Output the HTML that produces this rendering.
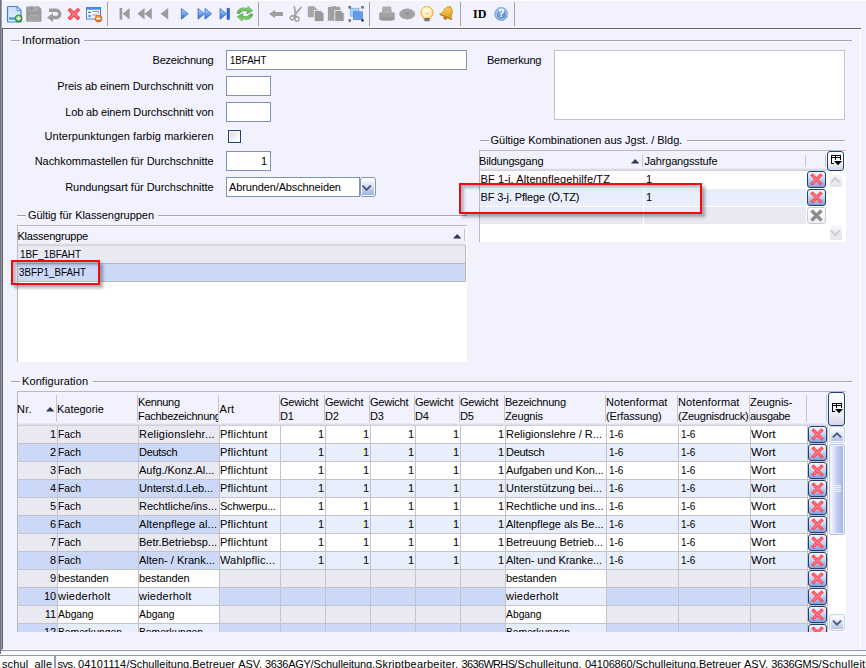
<!DOCTYPE html>
<html lang="de"><head><meta charset="utf-8"><title>Zeugnisformular</title>
<style>
html,body{margin:0;padding:0}
body{width:866px;height:668px;overflow:hidden;position:relative;background:#f2f2fe;font-family:"Liberation Sans",sans-serif;font-size:11px;color:#000;letter-spacing:-0.1px}
.a{position:absolute}
.t{position:absolute;white-space:nowrap;line-height:13px;height:13px}
.r{text-align:right}
.in{position:absolute;box-sizing:border-box;background:#fff;border:1px solid #7b93ba}
.gl{position:absolute;height:1px;background:#a5a5ac}
.sep{position:absolute;width:1px;top:2px;height:24px;background:#a2a2aa}
.hs{position:absolute;width:1px;background:#c6c6cc}
.c{position:absolute;height:17px;box-sizing:border-box;white-space:nowrap;overflow:hidden;line-height:17px;padding:0 1px 0 0;text-indent:0}
.c.r{text-align:right}
.del{position:absolute;width:19px;height:17px;box-sizing:border-box;border:1px solid #1f3f77;border-radius:3px;background:linear-gradient(#f4f7fd 0%,#c9d8f3 45%,#7ea3e2 100%)}
.del.dis{border-color:#c9c9d2;background:linear-gradient(#ffffff,#eeeef4)}
.del svg{position:absolute;left:2px;top:1px}
svg{position:absolute;overflow:visible}
</style></head><body>
<div class="a" style="left:0px;top:0px;width:866px;height:1px;background:#fdfdff;"></div>
<div class="a" style="left:2px;top:0px;width:1px;height:28px;background:#fbfbff;"></div>
<div class="a" style="left:0px;top:0px;width:1px;height:654px;background:#757575;"></div>
<div class="a" style="left:1px;top:0px;width:1px;height:651px;background:#8a9ab8;"></div>
<div class="a" style="left:2px;top:28px;width:859px;height:1px;background:#6a6a6a;"></div>
<div class="a" style="left:2px;top:28px;width:1px;height:621px;background:#646464;"></div>
<div class="a" style="left:860px;top:29px;width:1px;height:621px;background:#fff;"></div>
<div class="a" style="left:3px;top:649px;width:858px;height:1px;background:#fff;"></div>
<div class="a" style="left:1px;top:650px;width:865px;height:1px;background:#8a9ab8;"></div>
<div class="a" style="left:0px;top:651px;width:866px;height:4px;background:#f8f8ff;"></div>
<div class="a" style="left:0px;top:651px;width:1px;height:3px;background:#757575;"></div>
<div class="a" style="left:0px;top:655px;width:866px;height:1px;background:#8a9ab8;"></div>
<div class="a" style="left:0px;top:656px;width:866px;height:12px;background:#fff;"></div>
<svg width="0" height="0" style="left:0;top:0"><defs>
<linearGradient id="gdoc" x1="0" y1="0" x2="0" y2="1"><stop offset="0" stop-color="#c4ddf7"/><stop offset="1" stop-color="#eef5fd"/></linearGradient>
<linearGradient id="gblue" x1="0" y1="0" x2="0" y2="1"><stop offset="0" stop-color="#b0d4fb"/><stop offset="0.5" stop-color="#6ea6f0"/><stop offset="1" stop-color="#2a60d0"/></linearGradient>
<linearGradient id="ggreen" x1="0" y1="0" x2="0" y2="1"><stop offset="0" stop-color="#a4dc90"/><stop offset="1" stop-color="#4aa544"/></linearGradient>
<radialGradient id="gorange" cx="0.4" cy="0.35" r="0.7"><stop offset="0" stop-color="#ffb060"/><stop offset="1" stop-color="#d85a00"/></radialGradient>
<radialGradient id="ggr2" cx="0.4" cy="0.35" r="0.7"><stop offset="0" stop-color="#7cc860"/><stop offset="1" stop-color="#2f8a20"/></radialGradient>
<radialGradient id="ghelp" cx="0.4" cy="0.3" r="0.8"><stop offset="0" stop-color="#8fb4e2"/><stop offset="1" stop-color="#3f72b6"/></radialGradient>
<radialGradient id="gbulb" cx="0.45" cy="0.4" r="0.6"><stop offset="0" stop-color="#fffff4"/><stop offset="0.6" stop-color="#fff0c0"/><stop offset="1" stop-color="#fcc860"/></radialGradient>
<linearGradient id="gbell" x1="0" y1="0" x2="1" y2="1"><stop offset="0" stop-color="#ffe070"/><stop offset="1" stop-color="#d89010"/></linearGradient>
<linearGradient id="gdel" x1="0" y1="0" x2="0" y2="1"><stop offset="0" stop-color="#ff8088"/><stop offset="1" stop-color="#f03848"/></linearGradient>
</defs></svg>
<svg style="left:7px;top:6px" width="16" height="16" viewBox="0 0 16 16"><path d="M1.5 0.5h8.5l4 4v10.5a1 1 0 0 1-1 1h-11.5a1 1 0 0 1-1-1v-13.5a1 1 0 0 1 1-1z" fill="url(#gdoc)" stroke="#3f7fd6" stroke-width="1.2"/>
<path d="M10 0.8v3.7h3.8z" fill="#fff" stroke="#3f7fd6" stroke-width="0.8"/>
<rect x="2" y="11.2" width="8" height="2.6" fill="#4aa0ee"/>
<circle cx="11.6" cy="12.4" r="3.6" fill="url(#ggr2)" stroke="#2c7a22" stroke-width="0.5"/>
<path d="M11.6 10.2v4.4M9.4 12.4h4.4" stroke="#fff" stroke-width="1.5"/></svg>
<svg style="left:26px;top:6px" width="16" height="16" viewBox="0 0 16 16"><path d="M1 0.5h12l2.5 2.5v12a0.8 0.8 0 0 1-.8.8h-13.7a0.8 0.8 0 0 1-.8-.8v-13.7a0.8 0.8 0 0 1 .8-.8z" fill="#9b9b9b"/>
<rect x="3.5" y="0.5" width="8.5" height="5" fill="#a9a9a9"/><rect x="5" y="1.2" width="1.6" height="3" fill="#8a8a8a"/>
<rect x="3" y="8.8" width="10" height="6.6" fill="#ababab"/><path d="M4 11h8M4 13h8" stroke="#979797" stroke-width="1"/></svg>
<svg style="left:47px;top:8px" width="15" height="14" viewBox="0 0 15 14"><path d="M2 2.3h7.2a3.6 3.6 0 0 1 0 7.2h-4" fill="none" stroke="#9c9c9c" stroke-width="3.4"/>
<path d="M0 9.5l6-4.4v8.8z" fill="#9c9c9c"/></svg>
<svg style="left:67px;top:7px" width="14" height="14" viewBox="0 0 14 14"><path d="M1.8 2l10.2 10.2M12 2l-10.2 10.2" stroke="#f4444f" stroke-width="3.8"/>
<path d="M3 3.2l7.8 7.8M10.8 3.2l-7.8 7.8" stroke="#ff7c86" stroke-width="1.4"/></svg>
<svg style="left:86px;top:7px" width="16" height="14" viewBox="0 0 16 14"><rect x="0.5" y="0.5" width="14" height="11.5" fill="#f6f6fa" stroke="#4a82d8" stroke-width="1"/>
<rect x="0.5" y="0.5" width="14" height="2.2" fill="#4a8ae0"/>
<rect x="2.3" y="4.6" width="2.6" height="1.6" fill="#3f7fe0"/><rect x="2.3" y="8.2" width="2.6" height="1.6" fill="#3f7fe0"/>
<path d="M6.3 4.4h6.3v2M6.3 8h5" stroke="#8a8a90" stroke-width="0.9" fill="none"/>
<circle cx="12.5" cy="11.6" r="3.5" fill="url(#gorange)" stroke="#b84a00" stroke-width="0.4"/>
<rect x="10.4" y="10.9" width="4.2" height="1.5" fill="#fff"/></svg>
<div class="sep" style="left:107px"></div>
<svg style="left:119px;top:8px" width="11" height="12" viewBox="0 0 11 12"><rect x="0.6" y="0" width="2.6" height="11.6" fill="#9c9c9c"/><path d="M10.6 0v11.6l-7-5.8z" fill="#9c9c9c"/></svg>
<svg style="left:137px;top:8px" width="15" height="12" viewBox="0 0 15 12"><path d="M7.6 0v11.6l-7.3-5.8zM14.8 0v11.6l-7.3-5.8z" fill="#9c9c9c"/></svg>
<svg style="left:160px;top:8px" width="9" height="12" viewBox="0 0 9 12"><path d="M8.2 0v11.6l-7.6-5.8z" fill="#9c9c9c"/></svg>
<svg style="left:181px;top:8px" width="9" height="12" viewBox="0 0 9 12"><path d="M0.4 0.4v10.8l6.8-5.4z" fill="url(#gblue)" stroke="#2a62cc" stroke-width="0.7"/></svg>
<svg style="left:197px;top:8px" width="15" height="12" viewBox="0 0 15 12"><path d="M1 0.4v10.8l6.6-5.4z" fill="url(#gblue)" stroke="#2a62cc" stroke-width="0.7"/><path d="M8 0.4v10.8l6.6-5.4z" fill="url(#gblue)" stroke="#2a62cc" stroke-width="0.7"/></svg>
<svg style="left:219px;top:8px" width="12" height="12" viewBox="0 0 12 12"><path d="M1 0.4v10.8l6.6-5.4z" fill="url(#gblue)" stroke="#2a62cc" stroke-width="0.7"/><rect x="8" y="0.2" width="2.6" height="11.2" fill="#2a68d8" stroke="#1f58c0" stroke-width="0.5"/></svg>
<svg style="left:237px;top:6px" width="16" height="16" viewBox="0 0 16 16"><path d="M0.2 7.4C0.3 3.8 3.4 1.6 7 1.8L10.6 2.5L10.9 0.2L15.8 4.7L9.9 7.8L10.2 5.3C7.6 4.4 4.2 4.6 3.1 7.5Z" fill="url(#ggreen)" stroke="#4a9f44" stroke-width="0.5"/>
<path d="M0.2 7.4C0.3 3.8 3.4 1.6 7 1.8L10.6 2.5L10.9 0.2L15.8 4.7L9.9 7.8L10.2 5.3C7.6 4.4 4.2 4.6 3.1 7.5Z" transform="rotate(180 7.95 7.7)" fill="url(#ggreen)" stroke="#4a9f44" stroke-width="0.5"/></svg>
<div class="sep" style="left:258px"></div>
<svg style="left:269px;top:9px" width="15" height="10" viewBox="0 0 15 10"><path d="M0 5l6.2-4.2v2.2h7.8v4h-7.8v2.2z" fill="#9e9e9e"/></svg>
<svg style="left:289px;top:6px" width="13" height="16" viewBox="0 0 13 16"><path d="M5.4 0.8l1.6 10.4M12 1.4l-7.6 9.2" stroke="#a4a4a4" stroke-width="1.7" fill="none" stroke-linecap="round"/>
<ellipse cx="3.4" cy="11.8" rx="2.2" ry="2" fill="none" stroke="#a4a4a4" stroke-width="1.5" transform="rotate(-30 3.4 11.8)"/><ellipse cx="8" cy="13" rx="2" ry="2.3" fill="none" stroke="#a4a4a4" stroke-width="1.5"/></svg>
<svg style="left:307px;top:6px" width="18" height="16" viewBox="0 0 18 16"><path d="M0.8 0.2h6.4l3.3 3.2v7.9h-9.7z" fill="#a6a6a6"/><path d="M7.3 4.4h6.4l3.3 3.2v7.9h-9.7z" fill="#9a9a9a" stroke="#f2f2fe" stroke-width="0.8"/></svg>
<svg style="left:327px;top:6px" width="18" height="16" viewBox="0 0 18 16"><path d="M0.9 2.2q0-1.4 1.4-1.4h2.2q2.7-1.4 5.4 0h2.2q1.4 0 1.4 1.4v12.6h-12.6z" fill="#a0a0a0"/>
<path d="M7.8 4.4h6.2l3.2 3.2v7.9h-9.4z" fill="#9a9a9a" stroke="#f2f2fe" stroke-width="0.8"/></svg>
<svg style="left:348px;top:6px" width="16" height="16" viewBox="0 0 16 16"><rect x="2.2" y="2.2" width="8.8" height="8" fill="#a9cdf6" stroke="#7fb2ee" stroke-width="0.7"/>
<rect x="5.6" y="5.8" width="8.8" height="7.6" fill="#5c97e8" fill-opacity="0.92" stroke="#3f7edc" stroke-width="0.7"/>
<g fill="#222"><rect x="0.6" y="0.2" width="2.2" height="2.2"/><rect x="13.4" y="0.2" width="2.2" height="2.2"/><rect x="0.6" y="13.4" width="2.2" height="2.2"/><rect x="13.4" y="13.4" width="2.2" height="2.2"/></g>
<g fill="#fff"><rect x="1.3" y="0.9" width="0.8" height="0.8"/><rect x="14.1" y="0.9" width="0.8" height="0.8"/><rect x="1.3" y="14.1" width="0.8" height="0.8"/></g></svg>
<div class="sep" style="left:369px"></div>
<svg style="left:379px;top:6px" width="16" height="16" viewBox="0 0 16 16"><path d="M3.6 0.4h8.4l1 5.8h-10.4z" fill="#adadad"/><path d="M1.4 6.2h13.2a1.2 1.2 0 0 1 1.2 1.2v5.8a1 1 0 0 1-1 1h-13.6a1 1 0 0 1-1-1v-5.8a1.2 1.2 0 0 1 1.2-1.2z" fill="#a2a2a2"/><rect x="2.6" y="11" width="10.8" height="3.6" fill="#989898"/></svg>
<svg style="left:399px;top:8px" width="17" height="12" viewBox="0 0 17 12"><ellipse cx="8.2" cy="6" rx="8" ry="5.4" fill="#a4a4a4"/><ellipse cx="8.2" cy="5.4" rx="2.2" ry="1.3" fill="#949494"/></svg>
<svg style="left:420px;top:6px" width="14" height="16" viewBox="0 0 14 16"><path d="M7 0.6a6.2 6.2 0 0 1 3.6 11.2l-0.6 1.6h-6l-0.6-1.6a6.2 6.2 0 0 1 3.6-11.2z" fill="url(#gbulb)" stroke="#f0a428" stroke-width="0.9"/>
<path d="M5.2 6.4l1.8 2.2 1.8-2.2" fill="none" stroke="#e8a020" stroke-width="0.8"/>
<rect x="4.4" y="12" width="5.2" height="3.2" rx="0.8" fill="#5a5a5a"/><path d="M4.4 13.9h5.2" stroke="#d0d0d0" stroke-width="0.6"/></svg>
<svg style="left:439px;top:5px" width="17" height="17" viewBox="0 0 17 17"><g transform="rotate(24 8 9)"><path d="M8 1.6c3 0 4.2 2.6 4.4 5.6 0.2 2.6 1 3.8 2.2 5h-13.2c1.2-1.2 2-2.4 2.2-5 0.2-3 1.4-5.6 4.4-5.6z" fill="url(#gbell)" stroke="#c88610" stroke-width="0.7"/>
<circle cx="8" cy="1.4" r="1.1" fill="#d89818"/><ellipse cx="8" cy="13.6" rx="1.8" ry="1.5" fill="#c07a08"/><path d="M1.4 12.2h13.2" stroke="#b87808" stroke-width="1.1"/></g></svg>
<div class="sep" style="left:460px"></div>
<div class="t" style="left:473px;top:7px;font-family:'Liberation Serif',serif;font-weight:bold;font-size:12px;letter-spacing:0;line-height:14px;height:14px">ID</div>
<svg style="left:493px;top:6px" width="16" height="16" viewBox="0 0 16 16"><circle cx="8.2" cy="7.9" r="6.6" fill="url(#ghelp)" stroke="#9cbcec" stroke-width="1"/><circle cx="8.2" cy="7.9" r="5.2" fill="none" stroke="#e2ecfc" stroke-width="0.8"/>
<text x="8.2" y="11.4" text-anchor="middle" font-family="Liberation Sans, sans-serif" font-weight="bold" font-size="10" fill="#fff">?</text></svg>
<div class="sep" style="left:514px"></div>
<div class="gl" style="left:11px;top:40px;width:9px"></div>
<div class="gl" style="left:84px;top:40px;width:768px"></div>
<div class="gl" style="left:11px;top:41px;width:9px;background:#fbfbff"></div>
<div class="gl" style="left:84px;top:41px;width:768px;background:#fbfbff"></div>
<div class="t " style="left:22px;top:34px;letter-spacing:0;transform:scaleX(1.0539);transform-origin:left center;">Information</div>
<div class="t r " style="right:652.66px;top:54px;letter-spacing:-0.261px;">Bezeichnung</div>
<div class="t r " style="right:652.47px;top:80px;letter-spacing:-0.065px;">Preis ab einem Durchschnitt von</div>
<div class="t r " style="right:652.51px;top:106px;letter-spacing:-0.113px;">Lob ab einem Durchschnitt von</div>
<div class="t r " style="right:652.33px;top:130px;letter-spacing:0.07px;">Unterpunktungen farbig markieren</div>
<div class="t r " style="right:652.42px;top:155px;letter-spacing:-0.023px;">Nachkommastellen für Durchschnitte</div>
<div class="t r " style="right:652.42px;top:181px;letter-spacing:-0.025px;">Rundungsart für Durchschnitte</div>
<div class="in" style="left:226px;top:50px;width:241px;height:20px"></div>
<div class="t " style="left:230px;top:54px;letter-spacing:0;transform:scaleX(0.8779);transform-origin:left center;">1BFAHT</div>
<div class="in" style="left:226px;top:76px;width:45px;height:20px"></div>
<div class="in" style="left:226px;top:102px;width:45px;height:20px"></div>
<div class="in" style="left:228px;top:130px;width:13px;height:13px;border-color:#1c3f78;box-shadow:0 0 0 1px #fbfbff,inset 0 0 0 1px #fbfbf6;background:linear-gradient(135deg,#dadada,#fdfdfd 80%)"></div>
<div class="in" style="left:226px;top:151px;width:45px;height:20px"></div>
<div class="t r " style="right:599.1px;top:155px;">1</div>
<div class="in" style="left:226px;top:177px;width:134px;height:20px"></div>
<div class="t " style="left:229px;top:181px;letter-spacing:-0.125px;">Abrunden/Abschneiden</div>
<div class="a" style="left:360px;top:177px;width:16px;height:20px;box-sizing:border-box;border:1px solid #7f96bc;border-radius:3px;box-shadow:inset 0 0 0 1px #fff;background:linear-gradient(#fdfdff 10%,#c4d0ee 60%,#a6b6e0 92%)"></div>
<svg style="left:362px;top:185px" width="10" height="6" viewBox="0 0 10 6"><path d="M0.5 0.7l4.1 4.1l4.1-4.1" fill="none" stroke="#44546e" stroke-width="1.9"/></svg>
<div class="t " style="left:487px;top:54px;letter-spacing:-0.233px;">Bemerkung</div>
<div class="in" style="left:554px;top:50px;width:291px;height:70px;border-color:#c2c2c8"></div>
<div class="gl" style="left:17px;top:215px;width:9px"></div>
<div class="gl" style="left:158px;top:215px;width:309px"></div>
<div class="gl" style="left:17px;top:216px;width:9px;background:#fbfbff"></div>
<div class="gl" style="left:158px;top:216px;width:309px;background:#fbfbff"></div>
<div class="t " style="left:28px;top:209px;letter-spacing:-0.049px;">Gültig für Klassengruppen</div>
<div class="a" style="left:17px;top:225px;width:450px;height:137px;background:#fff;"></div>
<div class="a" style="left:17px;top:225px;width:450px;height:1px;background:#b9b9bf;"></div>
<div class="a" style="left:17px;top:225px;width:1px;height:137px;background:#b9b9bf;"></div>
<div class="a" style="left:18px;top:226px;width:448px;height:18px;background:#f2f2fe;"></div>
<div class="a" style="left:18px;top:243px;width:448px;height:1px;background:#e9e9f1;"></div>
<div class="a" style="left:18px;top:244px;width:448px;height:1px;background:#dddde7;"></div>
<div class="a" style="left:18px;top:245px;width:448px;height:1px;background:#d0d0dc;"></div>
<div class="t " style="left:17.5px;top:230px;letter-spacing:-0.224px;">Klassengruppe</div>
<div class="hs" style="left:464px;top:229px;height:12px"></div>
<svg style="left:453px;top:234px" width="9" height="5" viewBox="0 0 9 5"><path d="M0 4.4l4.2-4.4 4.2 4.4z" fill="#2a3a56"/></svg>
<div class="a" style="left:18px;top:246px;width:447px;height:17px;background:#e9e9f2;"></div>
<div class="a" style="left:18px;top:263px;width:447px;height:1px;background:#b9b9bf;"></div>
<div class="a" style="left:18px;top:264px;width:447px;height:17px;background:#cbd8f7;"></div>
<div class="a" style="left:18px;top:281px;width:447px;height:1px;background:#b9b9bf;"></div>
<div class="a" style="left:465px;top:246px;width:1px;height:36px;background:#b9b9bf;"></div>
<div class="t " style="left:19.5px;top:248px;letter-spacing:0;transform:scaleX(0.8989);transform-origin:left center;">1BF_1BFAHT</div>
<div class="t " style="left:19px;top:266px;letter-spacing:0;transform:scaleX(0.8909);transform-origin:left center;">3BFP1_BFAHT</div>
<div class="gl" style="left:480px;top:140px;width:8.5px"></div>
<div class="gl" style="left:686.5px;top:140px;width:158.5px"></div>
<div class="gl" style="left:480px;top:141px;width:8.5px;background:#fbfbff"></div>
<div class="gl" style="left:686.5px;top:141px;width:158.5px;background:#fbfbff"></div>
<div class="t " style="left:490.5px;top:134px;letter-spacing:-0.022px;">Gültige Kombinationen aus Jgst. / Bldg.</div>
<div class="a" style="left:479px;top:150px;width:367px;height:92px;background:#fff;"></div>
<div class="a" style="left:479px;top:150px;width:367px;height:1px;background:#b9b9bf;"></div>
<div class="a" style="left:479px;top:150px;width:1px;height:92px;background:#b9b9bf;"></div>
<div class="a" style="left:480px;top:151px;width:347px;height:18px;background:#f2f2fe;"></div>
<div class="a" style="left:480px;top:168px;width:347px;height:1px;background:#e9e9f1;"></div>
<div class="a" style="left:480px;top:169px;width:347px;height:1px;background:#dddde7;"></div>
<div class="a" style="left:480px;top:170px;width:347px;height:1px;background:#d0d0dc;"></div>
<div class="t " style="left:479px;top:155px;letter-spacing:-0.197px;">Bildungsgang</div>
<div class="t " style="left:644.5px;top:155px;letter-spacing:-0.171px;">Jahrgangsstufe</div>
<div class="hs" style="left:642px;top:155px;height:12px"></div>
<div class="hs" style="left:805px;top:155px;height:12px"></div>
<div class="hs" style="left:825px;top:155px;height:12px"></div>
<svg style="left:631px;top:159px" width="9" height="5" viewBox="0 0 9 5"><path d="M0 4.4l4.2-4.4 4.2 4.4z" fill="#2a3a56"/></svg>
<div class="a" style="left:480px;top:171px;width:163px;height:17px;background:#fff;"></div>
<div class="a" style="left:644px;top:171px;width:162px;height:17px;background:#fff;"></div>
<div class="a" style="left:480px;top:188px;width:326px;height:1px;background:#fff;"></div>
<div class="a" style="left:643px;top:171px;width:1px;height:17px;background:#fff;"></div>
<div class="t " style="left:480.5px;top:173px;letter-spacing:0.109px;">BF 1-j. Altenpflegehilfe/TZ</div>
<div class="t " style="left:646px;top:173px;">1</div>
<div class="del " style="left:807px;top:171px"><svg style="left:2px;top:1px" width="13" height="13" viewBox="0 0 13 13"><path d="M1.4 1.4l10.2 10.2M11.6 1.4l-10.2 10.2" stroke="#ff4c58" stroke-width="3.4"/><path d="M2.6 2.6l7.8 7.8M10.4 2.6l-7.8 7.8" stroke="#ff7c86" stroke-width="1.3"/></svg></div>
<div class="a" style="left:480px;top:189px;width:163px;height:17px;background:#e9eefc;"></div>
<div class="a" style="left:644px;top:189px;width:162px;height:17px;background:#e9eefc;"></div>
<div class="a" style="left:480px;top:206px;width:326px;height:1px;background:#fff;"></div>
<div class="a" style="left:643px;top:189px;width:1px;height:17px;background:#fff;"></div>
<div class="t " style="left:480.5px;top:191px;letter-spacing:-0.154px;">BF 3-j. Pflege (Ö,TZ)</div>
<div class="t " style="left:646px;top:191px;">1</div>
<div class="del " style="left:807px;top:189px"><svg style="left:2px;top:1px" width="13" height="13" viewBox="0 0 13 13"><path d="M1.4 1.4l10.2 10.2M11.6 1.4l-10.2 10.2" stroke="#ff4c58" stroke-width="3.4"/><path d="M2.6 2.6l7.8 7.8M10.4 2.6l-7.8 7.8" stroke="#ff7c86" stroke-width="1.3"/></svg></div>
<div class="a" style="left:480px;top:207px;width:163px;height:17px;background:#e9e9f2;"></div>
<div class="a" style="left:644px;top:207px;width:162px;height:17px;background:#e9e9f2;"></div>
<div class="a" style="left:480px;top:224px;width:326px;height:1px;background:#fff;"></div>
<div class="a" style="left:643px;top:207px;width:1px;height:17px;background:#fff;"></div>
<div class="del dis" style="left:807px;top:207px"><svg style="left:2px;top:1px" width="13" height="13" viewBox="0 0 13 13"><path d="M1.5 1.5l10 10M11.5 1.5l-10 10" stroke="#8c8c8c" stroke-width="3.4"/></svg></div>
<div class="a" style="left:827px;top:151px;width:17px;height:20px;box-sizing:border-box;border:1px solid #1c4280;border-radius:3px;background:linear-gradient(#fdfdff,#f4f4fb 55%,#d6d6e2)"></div>
<svg style="left:831px;top:155px" width="11" height="11" viewBox="0 0 11 11"><g fill="#000" shape-rendering="crispEdges"><rect x="0" y="0" width="10" height="1"/><rect x="0" y="2" width="10" height="1"/><rect x="0" y="0" width="1" height="9"/><rect x="0" y="8" width="3" height="1"/><rect x="4" y="0" width="1" height="5"/><rect x="9" y="0" width="1" height="5"/></g><path d="M3 6h8l-4 4.2z" fill="#000"/></svg>
<div class="a" style="left:830px;top:175px;width:12px;height:12px;background:linear-gradient(#f8f8fa,#e3e3e9)"></div>
<svg style="left:830px;top:175px" width="12" height="12" viewBox="0 0 12 12"><path d="M1 7.6l4.4-4.6l4.4 4.6" fill="none" stroke="#cdcdd3" stroke-width="2"/></svg>
<div class="a" style="left:830px;top:225px;width:12px;height:15px;background:linear-gradient(#f8f8fa,#e3e3e9)"></div>
<svg style="left:830px;top:225px" width="12" height="15" viewBox="0 0 12 15"><path d="M1 5.4l4.4 4.6l4.4-4.6" fill="none" stroke="#cdcdd3" stroke-width="2"/></svg>
<div class="gl" style="left:11px;top:381px;width:9px"></div>
<div class="gl" style="left:93px;top:381px;width:759px"></div>
<div class="gl" style="left:11px;top:382px;width:9px;background:#fbfbff"></div>
<div class="gl" style="left:93px;top:382px;width:759px;background:#fbfbff"></div>
<div class="t " style="left:22px;top:375px;letter-spacing:0.098px;">Konfiguration</div>
<div class="a" style="left:17px;top:391px;width:829px;height:241px;background:#fff;"></div>
<div class="a" style="left:17px;top:391px;width:829px;height:1px;background:#b9b9bf;"></div>
<div class="a" style="left:17px;top:391px;width:1px;height:241px;background:#b9b9bf;"></div>
<div class="a" style="left:18px;top:392px;width:810px;height:33px;background:#f2f2fe;"></div>
<div class="a" style="left:18px;top:423px;width:810px;height:1px;background:#e9e9f1;"></div>
<div class="a" style="left:18px;top:424px;width:810px;height:1px;background:#dddde7;"></div>
<div class="a" style="left:18px;top:425px;width:810px;height:1px;background:#d0d0dc;"></div>
<div class="hs" style="left:56px;top:395px;height:27px"></div>
<div class="hs" style="left:137px;top:395px;height:27px"></div>
<div class="hs" style="left:218px;top:395px;height:27px"></div>
<div class="hs" style="left:279px;top:395px;height:27px"></div>
<div class="hs" style="left:324px;top:395px;height:27px"></div>
<div class="hs" style="left:369px;top:395px;height:27px"></div>
<div class="hs" style="left:414px;top:395px;height:27px"></div>
<div class="hs" style="left:459px;top:395px;height:27px"></div>
<div class="hs" style="left:504px;top:395px;height:27px"></div>
<div class="hs" style="left:605px;top:395px;height:27px"></div>
<div class="hs" style="left:677px;top:395px;height:27px"></div>
<div class="hs" style="left:749px;top:395px;height:27px"></div>
<div class="hs" style="left:806px;top:395px;height:27px"></div>
<div class="hs" style="left:826px;top:395px;height:27px"></div>
<div class="t " style="left:17px;top:403px;letter-spacing:0.219px;">Nr.</div>
<svg style="left:45.5px;top:406.8px" width="9" height="5" viewBox="0 0 9 5"><path d="M0 4.4l4.2-4.4 4.2 4.4z" fill="#2a3a56"/></svg>
<div class="t " style="left:57px;top:403px;letter-spacing:-0.037px;">Kategorie</div>
<div class="t " style="left:219.6px;top:403px;letter-spacing:0.219px;">Art</div>
<div class="t " style="left:138px;top:396px;letter-spacing:-0.341px;">Kennung</div>
<div class="t " style="left:138px;top:410px;letter-spacing:-0.275px;width:79.5px;overflow:hidden">Fachbezeichnung</div>
<div class="t " style="left:280px;top:396px;letter-spacing:-0.192px;">Gewicht</div>
<div class="t " style="left:280px;top:410px;">D1</div>
<div class="t " style="left:325px;top:396px;letter-spacing:-0.192px;">Gewicht</div>
<div class="t " style="left:325px;top:410px;">D2</div>
<div class="t " style="left:370px;top:396px;letter-spacing:-0.192px;">Gewicht</div>
<div class="t " style="left:370px;top:410px;">D3</div>
<div class="t " style="left:415px;top:396px;letter-spacing:-0.192px;">Gewicht</div>
<div class="t " style="left:415px;top:410px;">D4</div>
<div class="t " style="left:460px;top:396px;letter-spacing:-0.192px;">Gewicht</div>
<div class="t " style="left:460px;top:410px;">D5</div>
<div class="t " style="left:505px;top:396px;letter-spacing:-0.261px;">Bezeichnung</div>
<div class="t " style="left:505px;top:410px;letter-spacing:-0.19px;">Zeugnis</div>
<div class="t " style="left:606px;top:396px;letter-spacing:0.087px;">Notenformat</div>
<div class="t " style="left:606px;top:410px;letter-spacing:-0.126px;">(Erfassung)</div>
<div class="t " style="left:678px;top:396px;letter-spacing:0.087px;">Notenformat</div>
<div class="t " style="left:678px;top:410px;letter-spacing:-0.212px;width:71px;overflow:hidden">(Zeugnisdruck)</div>
<div class="t " style="left:750px;top:396px;letter-spacing:-0.057px;">Zeugnis-</div>
<div class="t " style="left:750px;top:410px;letter-spacing:-0.286px;">ausgabe</div>
<div class="a" style="left:828px;top:392px;width:17px;height:34px;box-sizing:border-box;border:1px solid #1c4280;border-radius:3px;background:linear-gradient(#fdfdff,#f4f4fb 55%,#d6d6e2)"></div>
<svg style="left:832px;top:403px" width="11" height="11" viewBox="0 0 11 11"><g fill="#000" shape-rendering="crispEdges"><rect x="0" y="0" width="10" height="1"/><rect x="0" y="2" width="10" height="1"/><rect x="0" y="0" width="1" height="9"/><rect x="0" y="8" width="3" height="1"/><rect x="4" y="0" width="1" height="5"/><rect x="9" y="0" width="1" height="5"/></g><path d="M3 6h8l-4 4.2z" fill="#000"/></svg>
<div class="a" style="left:18px;top:426px;width:828px;height:206px;overflow:hidden">
<div class="a" style="left:0;top:0px;width:810px;height:18px;background:#c3c3c9"></div>
<div class="a" style="left:790px;top:0px;width:19px;height:17px;background:#fff"></div>
<div class="c r" style="left:0px;top:0px;width:39px;background:#e9e9f2;">1</div>
<div class="c" style="left:40px;top:0px;width:80px;background:#e9e9f2;"><span style="display:inline-block;letter-spacing:0;transform:scaleX(0.9400);transform-origin:left center">Fach</span></div>
<div class="c" style="left:121px;top:0px;width:80px;background:#e9e9f2;letter-spacing:0.223px;">Religionslehr...</div>
<div class="c" style="left:202px;top:0px;width:60px;background:#fff;letter-spacing:0.228px;">Pflichtunt</div>
<div class="c r" style="left:263px;top:0px;width:44px;background:#fff;">1</div>
<div class="c r" style="left:308px;top:0px;width:44px;background:#fff;">1</div>
<div class="c r" style="left:353px;top:0px;width:44px;background:#fff;">1</div>
<div class="c r" style="left:398px;top:0px;width:44px;background:#fff;">1</div>
<div class="c r" style="left:443px;top:0px;width:44px;background:#fff;">1</div>
<div class="c" style="left:488px;top:0px;width:100px;background:#fff;letter-spacing:0.0px;">Religionslehre / R...</div>
<div class="c" style="left:589px;top:0px;width:71px;background:#fff;text-indent:1px;"><span style="display:inline-block;letter-spacing:0;transform:scaleX(0.9053);transform-origin:left center">1-6</span></div>
<div class="c" style="left:661px;top:0px;width:71px;background:#fff;text-indent:1px;"><span style="display:inline-block;letter-spacing:0;transform:scaleX(0.9053);transform-origin:left center">1-6</span></div>
<div class="c" style="left:733px;top:0px;width:56px;background:#fff;"><span style="display:inline-block;letter-spacing:0;transform:scaleX(1.0681);transform-origin:left center">Wort</span></div>
<div class="del" style="left:790px;top:0px"><svg style="left:2px;top:1px" width="13" height="13" viewBox="0 0 13 13"><path d="M1.4 1.4l10.2 10.2M11.6 1.4l-10.2 10.2" stroke="#ff4c58" stroke-width="3.4"/><path d="M2.6 2.6l7.8 7.8M10.4 2.6l-7.8 7.8" stroke="#ff7c86" stroke-width="1.3"/></svg></div>
<div class="a" style="left:0;top:18px;width:810px;height:18px;background:#c3c3c9"></div>
<div class="a" style="left:790px;top:18px;width:19px;height:17px;background:#fff"></div>
<div class="c r" style="left:0px;top:18px;width:39px;background:#cbd8f7;">2</div>
<div class="c" style="left:40px;top:18px;width:80px;background:#cbd8f7;"><span style="display:inline-block;letter-spacing:0;transform:scaleX(0.9400);transform-origin:left center">Fach</span></div>
<div class="c" style="left:121px;top:18px;width:80px;background:#cbd8f7;letter-spacing:-0.31px;">Deutsch</div>
<div class="c" style="left:202px;top:18px;width:60px;background:#e9eefc;letter-spacing:0.228px;">Pflichtunt</div>
<div class="c r" style="left:263px;top:18px;width:44px;background:#e9eefc;">1</div>
<div class="c r" style="left:308px;top:18px;width:44px;background:#e9eefc;">1</div>
<div class="c r" style="left:353px;top:18px;width:44px;background:#e9eefc;">1</div>
<div class="c r" style="left:398px;top:18px;width:44px;background:#e9eefc;">1</div>
<div class="c r" style="left:443px;top:18px;width:44px;background:#e9eefc;">1</div>
<div class="c" style="left:488px;top:18px;width:100px;background:#e9eefc;letter-spacing:-0.31px;">Deutsch</div>
<div class="c" style="left:589px;top:18px;width:71px;background:#e9eefc;text-indent:1px;"><span style="display:inline-block;letter-spacing:0;transform:scaleX(0.9053);transform-origin:left center">1-6</span></div>
<div class="c" style="left:661px;top:18px;width:71px;background:#e9eefc;text-indent:1px;"><span style="display:inline-block;letter-spacing:0;transform:scaleX(0.9053);transform-origin:left center">1-6</span></div>
<div class="c" style="left:733px;top:18px;width:56px;background:#e9eefc;"><span style="display:inline-block;letter-spacing:0;transform:scaleX(1.0681);transform-origin:left center">Wort</span></div>
<div class="del" style="left:790px;top:18px"><svg style="left:2px;top:1px" width="13" height="13" viewBox="0 0 13 13"><path d="M1.4 1.4l10.2 10.2M11.6 1.4l-10.2 10.2" stroke="#ff4c58" stroke-width="3.4"/><path d="M2.6 2.6l7.8 7.8M10.4 2.6l-7.8 7.8" stroke="#ff7c86" stroke-width="1.3"/></svg></div>
<div class="a" style="left:0;top:36px;width:810px;height:18px;background:#c3c3c9"></div>
<div class="a" style="left:790px;top:36px;width:19px;height:17px;background:#fff"></div>
<div class="c r" style="left:0px;top:36px;width:39px;background:#e9e9f2;">3</div>
<div class="c" style="left:40px;top:36px;width:80px;background:#e9e9f2;"><span style="display:inline-block;letter-spacing:0;transform:scaleX(0.9400);transform-origin:left center">Fach</span></div>
<div class="c" style="left:121px;top:36px;width:80px;background:#e9e9f2;letter-spacing:-0.029px;">Aufg./Konz.Al...</div>
<div class="c" style="left:202px;top:36px;width:60px;background:#fff;letter-spacing:0.228px;">Pflichtunt</div>
<div class="c r" style="left:263px;top:36px;width:44px;background:#fff;">1</div>
<div class="c r" style="left:308px;top:36px;width:44px;background:#fff;">1</div>
<div class="c r" style="left:353px;top:36px;width:44px;background:#fff;">1</div>
<div class="c r" style="left:398px;top:36px;width:44px;background:#fff;">1</div>
<div class="c r" style="left:443px;top:36px;width:44px;background:#fff;">1</div>
<div class="c" style="left:488px;top:36px;width:100px;background:#fff;letter-spacing:-0.151px;">Aufgaben und Kon...</div>
<div class="c" style="left:589px;top:36px;width:71px;background:#fff;text-indent:1px;"><span style="display:inline-block;letter-spacing:0;transform:scaleX(0.9053);transform-origin:left center">1-6</span></div>
<div class="c" style="left:661px;top:36px;width:71px;background:#fff;text-indent:1px;"><span style="display:inline-block;letter-spacing:0;transform:scaleX(0.9053);transform-origin:left center">1-6</span></div>
<div class="c" style="left:733px;top:36px;width:56px;background:#fff;"><span style="display:inline-block;letter-spacing:0;transform:scaleX(1.0681);transform-origin:left center">Wort</span></div>
<div class="del" style="left:790px;top:36px"><svg style="left:2px;top:1px" width="13" height="13" viewBox="0 0 13 13"><path d="M1.4 1.4l10.2 10.2M11.6 1.4l-10.2 10.2" stroke="#ff4c58" stroke-width="3.4"/><path d="M2.6 2.6l7.8 7.8M10.4 2.6l-7.8 7.8" stroke="#ff7c86" stroke-width="1.3"/></svg></div>
<div class="a" style="left:0;top:54px;width:810px;height:18px;background:#c3c3c9"></div>
<div class="a" style="left:790px;top:54px;width:19px;height:17px;background:#fff"></div>
<div class="c r" style="left:0px;top:54px;width:39px;background:#cbd8f7;">4</div>
<div class="c" style="left:40px;top:54px;width:80px;background:#cbd8f7;"><span style="display:inline-block;letter-spacing:0;transform:scaleX(0.9400);transform-origin:left center">Fach</span></div>
<div class="c" style="left:121px;top:54px;width:80px;background:#cbd8f7;letter-spacing:-0.081px;">Unterst.d.Leb...</div>
<div class="c" style="left:202px;top:54px;width:60px;background:#e9eefc;letter-spacing:0.228px;">Pflichtunt</div>
<div class="c r" style="left:263px;top:54px;width:44px;background:#e9eefc;">1</div>
<div class="c r" style="left:308px;top:54px;width:44px;background:#e9eefc;">1</div>
<div class="c r" style="left:353px;top:54px;width:44px;background:#e9eefc;">1</div>
<div class="c r" style="left:398px;top:54px;width:44px;background:#e9eefc;">1</div>
<div class="c r" style="left:443px;top:54px;width:44px;background:#e9eefc;">1</div>
<div class="c" style="left:488px;top:54px;width:100px;background:#e9eefc;letter-spacing:0.032px;">Unterstützung bei...</div>
<div class="c" style="left:589px;top:54px;width:71px;background:#e9eefc;text-indent:1px;"><span style="display:inline-block;letter-spacing:0;transform:scaleX(0.9053);transform-origin:left center">1-6</span></div>
<div class="c" style="left:661px;top:54px;width:71px;background:#e9eefc;text-indent:1px;"><span style="display:inline-block;letter-spacing:0;transform:scaleX(0.9053);transform-origin:left center">1-6</span></div>
<div class="c" style="left:733px;top:54px;width:56px;background:#e9eefc;"><span style="display:inline-block;letter-spacing:0;transform:scaleX(1.0681);transform-origin:left center">Wort</span></div>
<div class="del" style="left:790px;top:54px"><svg style="left:2px;top:1px" width="13" height="13" viewBox="0 0 13 13"><path d="M1.4 1.4l10.2 10.2M11.6 1.4l-10.2 10.2" stroke="#ff4c58" stroke-width="3.4"/><path d="M2.6 2.6l7.8 7.8M10.4 2.6l-7.8 7.8" stroke="#ff7c86" stroke-width="1.3"/></svg></div>
<div class="a" style="left:0;top:72px;width:810px;height:18px;background:#c3c3c9"></div>
<div class="a" style="left:790px;top:72px;width:19px;height:17px;background:#fff"></div>
<div class="c r" style="left:0px;top:72px;width:39px;background:#e9e9f2;">5</div>
<div class="c" style="left:40px;top:72px;width:80px;background:#e9e9f2;"><span style="display:inline-block;letter-spacing:0;transform:scaleX(0.9400);transform-origin:left center">Fach</span></div>
<div class="c" style="left:121px;top:72px;width:80px;background:#e9e9f2;letter-spacing:0.021px;">Rechtliche/ins...</div>
<div class="c" style="left:202px;top:72px;width:60px;background:#fff;letter-spacing:-0.219px;">Schwerpu...</div>
<div class="c r" style="left:263px;top:72px;width:44px;background:#fff;">1</div>
<div class="c r" style="left:308px;top:72px;width:44px;background:#fff;">1</div>
<div class="c r" style="left:353px;top:72px;width:44px;background:#fff;">1</div>
<div class="c r" style="left:398px;top:72px;width:44px;background:#fff;">1</div>
<div class="c r" style="left:443px;top:72px;width:44px;background:#fff;">1</div>
<div class="c" style="left:488px;top:72px;width:100px;background:#fff;letter-spacing:-0.073px;">Rechtliche und ins...</div>
<div class="c" style="left:589px;top:72px;width:71px;background:#fff;text-indent:1px;"><span style="display:inline-block;letter-spacing:0;transform:scaleX(0.9053);transform-origin:left center">1-6</span></div>
<div class="c" style="left:661px;top:72px;width:71px;background:#fff;text-indent:1px;"><span style="display:inline-block;letter-spacing:0;transform:scaleX(0.9053);transform-origin:left center">1-6</span></div>
<div class="c" style="left:733px;top:72px;width:56px;background:#fff;"><span style="display:inline-block;letter-spacing:0;transform:scaleX(1.0681);transform-origin:left center">Wort</span></div>
<div class="del" style="left:790px;top:72px"><svg style="left:2px;top:1px" width="13" height="13" viewBox="0 0 13 13"><path d="M1.4 1.4l10.2 10.2M11.6 1.4l-10.2 10.2" stroke="#ff4c58" stroke-width="3.4"/><path d="M2.6 2.6l7.8 7.8M10.4 2.6l-7.8 7.8" stroke="#ff7c86" stroke-width="1.3"/></svg></div>
<div class="a" style="left:0;top:90px;width:810px;height:18px;background:#c3c3c9"></div>
<div class="a" style="left:790px;top:90px;width:19px;height:17px;background:#fff"></div>
<div class="c r" style="left:0px;top:90px;width:39px;background:#cbd8f7;">6</div>
<div class="c" style="left:40px;top:90px;width:80px;background:#cbd8f7;"><span style="display:inline-block;letter-spacing:0;transform:scaleX(0.9400);transform-origin:left center">Fach</span></div>
<div class="c" style="left:121px;top:90px;width:80px;background:#cbd8f7;letter-spacing:0.135px;">Altenpflege al...</div>
<div class="c" style="left:202px;top:90px;width:60px;background:#e9eefc;letter-spacing:0.228px;">Pflichtunt</div>
<div class="c r" style="left:263px;top:90px;width:44px;background:#e9eefc;">1</div>
<div class="c r" style="left:308px;top:90px;width:44px;background:#e9eefc;">1</div>
<div class="c r" style="left:353px;top:90px;width:44px;background:#e9eefc;">1</div>
<div class="c r" style="left:398px;top:90px;width:44px;background:#e9eefc;">1</div>
<div class="c r" style="left:443px;top:90px;width:44px;background:#e9eefc;">1</div>
<div class="c" style="left:488px;top:90px;width:100px;background:#e9eefc;letter-spacing:-0.012px;">Altenpflege als Be...</div>
<div class="c" style="left:589px;top:90px;width:71px;background:#e9eefc;text-indent:1px;"><span style="display:inline-block;letter-spacing:0;transform:scaleX(0.9053);transform-origin:left center">1-6</span></div>
<div class="c" style="left:661px;top:90px;width:71px;background:#e9eefc;text-indent:1px;"><span style="display:inline-block;letter-spacing:0;transform:scaleX(0.9053);transform-origin:left center">1-6</span></div>
<div class="c" style="left:733px;top:90px;width:56px;background:#e9eefc;"><span style="display:inline-block;letter-spacing:0;transform:scaleX(1.0681);transform-origin:left center">Wort</span></div>
<div class="del" style="left:790px;top:90px"><svg style="left:2px;top:1px" width="13" height="13" viewBox="0 0 13 13"><path d="M1.4 1.4l10.2 10.2M11.6 1.4l-10.2 10.2" stroke="#ff4c58" stroke-width="3.4"/><path d="M2.6 2.6l7.8 7.8M10.4 2.6l-7.8 7.8" stroke="#ff7c86" stroke-width="1.3"/></svg></div>
<div class="a" style="left:0;top:108px;width:810px;height:18px;background:#c3c3c9"></div>
<div class="a" style="left:790px;top:108px;width:19px;height:17px;background:#fff"></div>
<div class="c r" style="left:0px;top:108px;width:39px;background:#e9e9f2;">7</div>
<div class="c" style="left:40px;top:108px;width:80px;background:#e9e9f2;"><span style="display:inline-block;letter-spacing:0;transform:scaleX(0.9400);transform-origin:left center">Fach</span></div>
<div class="c" style="left:121px;top:108px;width:80px;background:#e9e9f2;letter-spacing:-0.017px;">Betr.Betriebsp...</div>
<div class="c" style="left:202px;top:108px;width:60px;background:#fff;letter-spacing:0.228px;">Pflichtunt</div>
<div class="c r" style="left:263px;top:108px;width:44px;background:#fff;">1</div>
<div class="c r" style="left:308px;top:108px;width:44px;background:#fff;">1</div>
<div class="c r" style="left:353px;top:108px;width:44px;background:#fff;">1</div>
<div class="c r" style="left:398px;top:108px;width:44px;background:#fff;">1</div>
<div class="c r" style="left:443px;top:108px;width:44px;background:#fff;">1</div>
<div class="c" style="left:488px;top:108px;width:100px;background:#fff;letter-spacing:-0.044px;">Betreuung Betrieb...</div>
<div class="c" style="left:589px;top:108px;width:71px;background:#fff;text-indent:1px;"><span style="display:inline-block;letter-spacing:0;transform:scaleX(0.9053);transform-origin:left center">1-6</span></div>
<div class="c" style="left:661px;top:108px;width:71px;background:#fff;text-indent:1px;"><span style="display:inline-block;letter-spacing:0;transform:scaleX(0.9053);transform-origin:left center">1-6</span></div>
<div class="c" style="left:733px;top:108px;width:56px;background:#fff;"><span style="display:inline-block;letter-spacing:0;transform:scaleX(1.0681);transform-origin:left center">Wort</span></div>
<div class="del" style="left:790px;top:108px"><svg style="left:2px;top:1px" width="13" height="13" viewBox="0 0 13 13"><path d="M1.4 1.4l10.2 10.2M11.6 1.4l-10.2 10.2" stroke="#ff4c58" stroke-width="3.4"/><path d="M2.6 2.6l7.8 7.8M10.4 2.6l-7.8 7.8" stroke="#ff7c86" stroke-width="1.3"/></svg></div>
<div class="a" style="left:0;top:126px;width:810px;height:18px;background:#c3c3c9"></div>
<div class="a" style="left:790px;top:126px;width:19px;height:17px;background:#fff"></div>
<div class="c r" style="left:0px;top:126px;width:39px;background:#cbd8f7;">8</div>
<div class="c" style="left:40px;top:126px;width:80px;background:#cbd8f7;"><span style="display:inline-block;letter-spacing:0;transform:scaleX(0.9400);transform-origin:left center">Fach</span></div>
<div class="c" style="left:121px;top:126px;width:80px;background:#cbd8f7;letter-spacing:-0.001px;">Alten- / Krank...</div>
<div class="c" style="left:202px;top:126px;width:60px;background:#e9eefc;letter-spacing:0.146px;">Wahlpflic...</div>
<div class="c r" style="left:263px;top:126px;width:44px;background:#e9eefc;">1</div>
<div class="c r" style="left:308px;top:126px;width:44px;background:#e9eefc;">1</div>
<div class="c r" style="left:353px;top:126px;width:44px;background:#e9eefc;">1</div>
<div class="c r" style="left:398px;top:126px;width:44px;background:#e9eefc;">1</div>
<div class="c r" style="left:443px;top:126px;width:44px;background:#e9eefc;">1</div>
<div class="c" style="left:488px;top:126px;width:100px;background:#e9eefc;letter-spacing:-0.065px;">Alten- und Kranke...</div>
<div class="c" style="left:589px;top:126px;width:71px;background:#e9eefc;text-indent:1px;"><span style="display:inline-block;letter-spacing:0;transform:scaleX(0.9053);transform-origin:left center">1-6</span></div>
<div class="c" style="left:661px;top:126px;width:71px;background:#e9eefc;text-indent:1px;"><span style="display:inline-block;letter-spacing:0;transform:scaleX(0.9053);transform-origin:left center">1-6</span></div>
<div class="c" style="left:733px;top:126px;width:56px;background:#e9eefc;"><span style="display:inline-block;letter-spacing:0;transform:scaleX(1.0681);transform-origin:left center">Wort</span></div>
<div class="del" style="left:790px;top:126px"><svg style="left:2px;top:1px" width="13" height="13" viewBox="0 0 13 13"><path d="M1.4 1.4l10.2 10.2M11.6 1.4l-10.2 10.2" stroke="#ff4c58" stroke-width="3.4"/><path d="M2.6 2.6l7.8 7.8M10.4 2.6l-7.8 7.8" stroke="#ff7c86" stroke-width="1.3"/></svg></div>
<div class="a" style="left:0;top:144px;width:810px;height:18px;background:#c3c3c9"></div>
<div class="a" style="left:790px;top:144px;width:19px;height:17px;background:#fff"></div>
<div class="c r" style="left:0px;top:144px;width:39px;background:#e9e9f2;">9</div>
<div class="c" style="left:40px;top:144px;width:80px;background:#fff;letter-spacing:-0.099px;">bestanden</div>
<div class="c" style="left:121px;top:144px;width:80px;background:#fff;letter-spacing:-0.099px;">bestanden</div>
<div class="c" style="left:202px;top:144px;width:60px;background:#e9e9f2;"></div>
<div class="c r" style="left:263px;top:144px;width:44px;background:#e9e9f2;"></div>
<div class="c r" style="left:308px;top:144px;width:44px;background:#e9e9f2;"></div>
<div class="c r" style="left:353px;top:144px;width:44px;background:#e9e9f2;"></div>
<div class="c r" style="left:398px;top:144px;width:44px;background:#e9e9f2;"></div>
<div class="c r" style="left:443px;top:144px;width:44px;background:#e9e9f2;"></div>
<div class="c" style="left:488px;top:144px;width:100px;background:#fff;letter-spacing:-0.099px;">bestanden</div>
<div class="c" style="left:589px;top:144px;width:71px;background:#e9e9f2;"></div>
<div class="c" style="left:661px;top:144px;width:71px;background:#e9e9f2;"></div>
<div class="c" style="left:733px;top:144px;width:56px;background:#e9e9f2;"></div>
<div class="del" style="left:790px;top:144px"><svg style="left:2px;top:1px" width="13" height="13" viewBox="0 0 13 13"><path d="M1.4 1.4l10.2 10.2M11.6 1.4l-10.2 10.2" stroke="#ff4c58" stroke-width="3.4"/><path d="M2.6 2.6l7.8 7.8M10.4 2.6l-7.8 7.8" stroke="#ff7c86" stroke-width="1.3"/></svg></div>
<div class="a" style="left:0;top:162px;width:810px;height:18px;background:#c3c3c9"></div>
<div class="a" style="left:790px;top:162px;width:19px;height:17px;background:#fff"></div>
<div class="c r" style="left:0px;top:162px;width:39px;background:#cbd8f7;">10</div>
<div class="c" style="left:40px;top:162px;width:80px;background:#e9eefc;letter-spacing:0.229px;">wiederholt</div>
<div class="c" style="left:121px;top:162px;width:80px;background:#e9eefc;letter-spacing:0.229px;">wiederholt</div>
<div class="c" style="left:202px;top:162px;width:60px;background:#cbd8f7;"></div>
<div class="c r" style="left:263px;top:162px;width:44px;background:#cbd8f7;"></div>
<div class="c r" style="left:308px;top:162px;width:44px;background:#cbd8f7;"></div>
<div class="c r" style="left:353px;top:162px;width:44px;background:#cbd8f7;"></div>
<div class="c r" style="left:398px;top:162px;width:44px;background:#cbd8f7;"></div>
<div class="c r" style="left:443px;top:162px;width:44px;background:#cbd8f7;"></div>
<div class="c" style="left:488px;top:162px;width:100px;background:#e9eefc;letter-spacing:0.229px;">wiederholt</div>
<div class="c" style="left:589px;top:162px;width:71px;background:#cbd8f7;"></div>
<div class="c" style="left:661px;top:162px;width:71px;background:#cbd8f7;"></div>
<div class="c" style="left:733px;top:162px;width:56px;background:#cbd8f7;"></div>
<div class="del" style="left:790px;top:162px"><svg style="left:2px;top:1px" width="13" height="13" viewBox="0 0 13 13"><path d="M1.4 1.4l10.2 10.2M11.6 1.4l-10.2 10.2" stroke="#ff4c58" stroke-width="3.4"/><path d="M2.6 2.6l7.8 7.8M10.4 2.6l-7.8 7.8" stroke="#ff7c86" stroke-width="1.3"/></svg></div>
<div class="a" style="left:0;top:180px;width:810px;height:18px;background:#c3c3c9"></div>
<div class="a" style="left:790px;top:180px;width:19px;height:17px;background:#fff"></div>
<div class="c r" style="left:0px;top:180px;width:39px;background:#e9e9f2;">11</div>
<div class="c" style="left:40px;top:180px;width:80px;background:#fff;"><span style="display:inline-block;letter-spacing:0;transform:scaleX(0.9384);transform-origin:left center">Abgang</span></div>
<div class="c" style="left:121px;top:180px;width:80px;background:#fff;"><span style="display:inline-block;letter-spacing:0;transform:scaleX(0.9384);transform-origin:left center">Abgang</span></div>
<div class="c" style="left:202px;top:180px;width:60px;background:#e9e9f2;"></div>
<div class="c r" style="left:263px;top:180px;width:44px;background:#e9e9f2;"></div>
<div class="c r" style="left:308px;top:180px;width:44px;background:#e9e9f2;"></div>
<div class="c r" style="left:353px;top:180px;width:44px;background:#e9e9f2;"></div>
<div class="c r" style="left:398px;top:180px;width:44px;background:#e9e9f2;"></div>
<div class="c r" style="left:443px;top:180px;width:44px;background:#e9e9f2;"></div>
<div class="c" style="left:488px;top:180px;width:100px;background:#fff;"><span style="display:inline-block;letter-spacing:0;transform:scaleX(0.9384);transform-origin:left center">Abgang</span></div>
<div class="c" style="left:589px;top:180px;width:71px;background:#e9e9f2;"></div>
<div class="c" style="left:661px;top:180px;width:71px;background:#e9e9f2;"></div>
<div class="c" style="left:733px;top:180px;width:56px;background:#e9e9f2;"></div>
<div class="del" style="left:790px;top:180px"><svg style="left:2px;top:1px" width="13" height="13" viewBox="0 0 13 13"><path d="M1.4 1.4l10.2 10.2M11.6 1.4l-10.2 10.2" stroke="#ff4c58" stroke-width="3.4"/><path d="M2.6 2.6l7.8 7.8M10.4 2.6l-7.8 7.8" stroke="#ff7c86" stroke-width="1.3"/></svg></div>
<div class="a" style="left:0;top:198px;width:810px;height:18px;background:#c3c3c9"></div>
<div class="a" style="left:790px;top:198px;width:19px;height:17px;background:#fff"></div>
<div class="c r" style="left:0px;top:198px;width:39px;background:#cbd8f7;">12</div>
<div class="c" style="left:40px;top:198px;width:80px;background:#e9eefc;"><span style="display:inline-block;letter-spacing:0;transform:scaleX(0.9343);transform-origin:left center">Bemerkungen</span></div>
<div class="c" style="left:121px;top:198px;width:80px;background:#e9eefc;"><span style="display:inline-block;letter-spacing:0;transform:scaleX(0.9343);transform-origin:left center">Bemerkungen</span></div>
<div class="c" style="left:202px;top:198px;width:60px;background:#cbd8f7;"></div>
<div class="c r" style="left:263px;top:198px;width:44px;background:#cbd8f7;"></div>
<div class="c r" style="left:308px;top:198px;width:44px;background:#cbd8f7;"></div>
<div class="c r" style="left:353px;top:198px;width:44px;background:#cbd8f7;"></div>
<div class="c r" style="left:398px;top:198px;width:44px;background:#cbd8f7;"></div>
<div class="c r" style="left:443px;top:198px;width:44px;background:#cbd8f7;"></div>
<div class="c" style="left:488px;top:198px;width:100px;background:#e9eefc;"><span style="display:inline-block;letter-spacing:0;transform:scaleX(0.9343);transform-origin:left center">Bemerkungen</span></div>
<div class="c" style="left:589px;top:198px;width:71px;background:#cbd8f7;"></div>
<div class="c" style="left:661px;top:198px;width:71px;background:#cbd8f7;"></div>
<div class="c" style="left:733px;top:198px;width:56px;background:#cbd8f7;"></div>
<div class="del" style="left:790px;top:198px"><svg style="left:2px;top:1px" width="13" height="13" viewBox="0 0 13 13"><path d="M1.4 1.4l10.2 10.2M11.6 1.4l-10.2 10.2" stroke="#ff4c58" stroke-width="3.4"/><path d="M2.6 2.6l7.8 7.8M10.4 2.6l-7.8 7.8" stroke="#ff7c86" stroke-width="1.3"/></svg></div>
</div>
<div class="a" style="left:829px;top:426px;width:17px;height:206px;background:#fff;"></div>
<div class="a" style="left:829px;top:426px;width:16px;height:17px;box-sizing:border-box;border:1px solid #c4d0ee;border-radius:2px;box-shadow:inset 0 0 0 1px #f6f8ff;background:linear-gradient(#fbfcff 15%,#b4c2e8 95%)"></div>
<svg style="left:831px;top:431px" width="12" height="8" viewBox="0 0 12 8"><path d="M2 6.4l4-4l4 4" fill="none" stroke="#4b5c7a" stroke-width="2"/></svg>
<div class="a" style="left:829px;top:614px;width:16px;height:17px;box-sizing:border-box;border:1px solid #c4d0ee;border-radius:2px;box-shadow:inset 0 0 0 1px #f6f8ff;background:linear-gradient(#fbfcff 15%,#b4c2e8 95%)"></div>
<svg style="left:831px;top:619px" width="12" height="8" viewBox="0 0 12 8"><path d="M2 1.6l4 4l4-4" fill="none" stroke="#4b5c7a" stroke-width="2"/></svg>
<div class="a" style="left:829px;top:444px;width:16px;height:91px;box-sizing:border-box;border:1px solid #b2c0e8;border-radius:2px;box-shadow:inset 0 0 0 1px #f6f8ff;background:linear-gradient(90deg,#f0f4fe 10%,#c2cef0 50%,#a6b6e2 92%)"></div>
<div class="a" style="left:833px;top:485px;width:8px;height:1px;background:#eef2fc;"></div>
<div class="a" style="left:833px;top:487px;width:8px;height:1px;background:#eef2fc;"></div>
<div class="a" style="left:833px;top:489px;width:8px;height:1px;background:#eef2fc;"></div>
<div class="a" style="left:833px;top:491px;width:8px;height:1px;background:#eef2fc;"></div>
<div class="a" style="left:54px;top:656px;width:2px;height:12px;background:#8c9cbc;"></div>
<div class="t " style="left:2px;top:658px;letter-spacing:0.12px;">schul_alle</div>
<div class="t" style="left:57.5px;top:658px;white-space:pre"><span style="letter-spacing:-0.445px">sys, </span><span style="letter-spacing:0.148px">04101114</span><span style="letter-spacing:-0.018px">/Schulleitung,</span><span style="letter-spacing:0.094px">Betreuer </span><span style="letter-spacing:-0.105px">ASV, </span><span style="letter-spacing:-0.3px">3636AGY</span><span style="letter-spacing:-0.11px">/Schulleitung,</span><span style="letter-spacing:0.191px">Skriptbearbeiter, </span><span style="letter-spacing:-0.672px">3636WRHS</span><span style="letter-spacing:0.099px">/Schulleitung, </span><span style="letter-spacing:-0.182px">04106860</span><span style="letter-spacing:0.032px">/Schulleitung,</span><span style="letter-spacing:-0.028px">Betreuer </span><span style="letter-spacing:0.055px">ASV, </span><span style="letter-spacing:-0.347px">3636GMS</span><span style="letter-spacing:0.238px">/Schulleitung</span></div>
<div class="a" style="left:11px;top:260px;width:89px;height:25px;box-sizing:border-box;border:2px solid #f20a0e;box-shadow:3px 3px 3px rgba(40,40,50,0.38),inset 3px 3px 3px rgba(40,40,50,0.30)"></div>
<div class="a" style="left:459px;top:183px;width:243px;height:31px;box-sizing:border-box;border:2px solid #f20a0e;box-shadow:3px 3px 3px rgba(40,40,50,0.38),inset 3px 3px 3px rgba(40,40,50,0.30)"></div>
</body></html>
